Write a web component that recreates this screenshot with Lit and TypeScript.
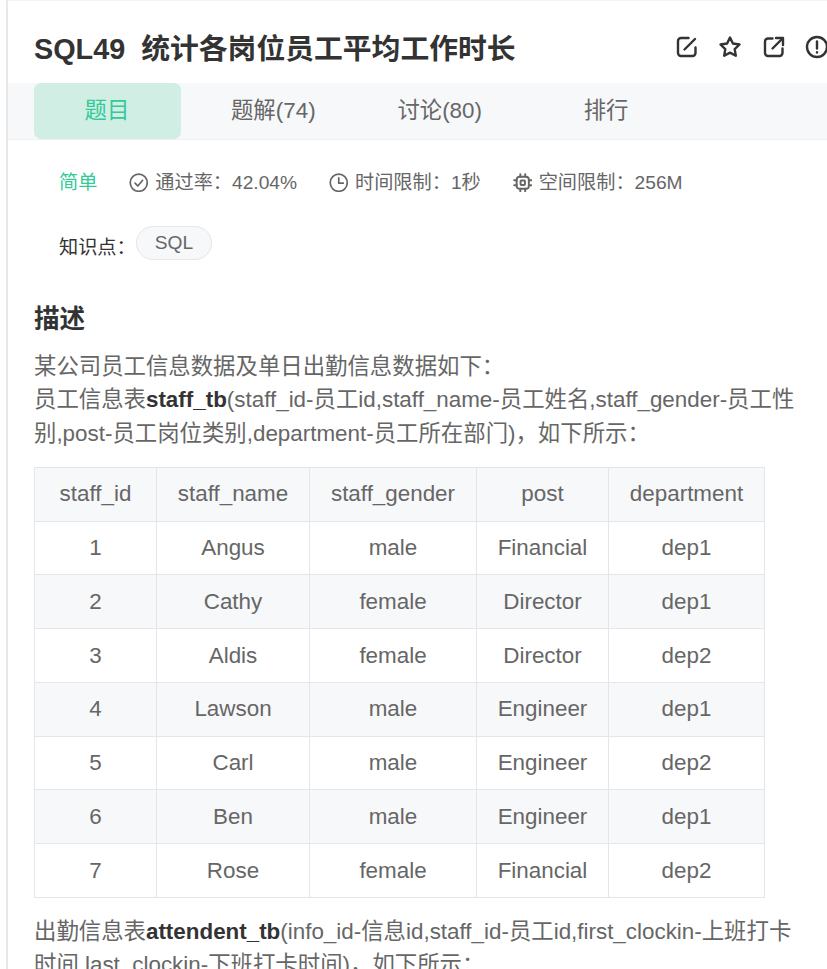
import { LitElement, html, css, svg } from "lit";
import { customElement } from "lit/decorators.js";

const rows = [
  ["1", "Angus", "male", "Financial", "dep1"],
  ["2", "Cathy", "female", "Director", "dep1"],
  ["3", "Aldis", "female", "Director", "dep2"],
  ["4", "Lawson", "male", "Engineer", "dep1"],
  ["5", "Carl", "male", "Engineer", "dep2"],
  ["6", "Ben", "male", "Engineer", "dep1"],
  ["7", "Rose", "female", "Financial", "dep2"],
];
const heads = ["staff_id", "staff_name", "staff_gender", "post", "department"];
const colWidths = [122, 153, 167, 132, 156];

const icon = (size: number, sw: number, body: unknown) => html`<svg
  width=${size} height=${size} viewBox="0 0 24 24" fill="none" stroke="currentColor"
  stroke-width=${sw} stroke-linecap="round" stroke-linejoin="round">${body}</svg>`;

@customElement("app-root")
export class AppRoot extends LitElement {
  static styles = css`
    :host {
      display: block;
      height: 969px;
      overflow: hidden;
      padding-left: 6px;
      box-sizing: border-box;
      font-family: "Liberation Sans", "Noto Sans CJK SC", sans-serif;
      color: #666;
      background: #fff;
    }
    .page {
      border-left: 2px solid #e8e8e8;
      border-top: 1px solid #f3f3f3;
      height: 100%;
      box-sizing: border-box;
      overflow: hidden;
    }
    .title-row {
      display: flex;
      align-items: center;
      justify-content: space-between;
      padding: 24.5px 0 14.5px 26px;
      width: 808px;
      box-sizing: border-box;
    }
    h1 {
      margin: 0;
      padding-top: 3px;
      font-size: 28.8px;
      line-height: 40px;
      font-weight: 700;
      color: #333;
      white-space: pre;
    }
    .actions {
      display: flex;
      gap: 19.5px;
      color: #333;
      margin-right: -13px;
    }
    .actions svg { display: block; }
    .tabs {
      display: flex;
      gap: 19.6px;
      padding-left: 26px;
      background: #f7f8fa;
      border-bottom: 1px solid #eef0f3;
    }
    .tab {
      width: 146.8px;
      height: 56px;
      line-height: 56px;
      box-sizing: border-box;
      padding-right: 1px;
      text-align: center;
      font-size: 22.4px;
      color: #666;
      border-radius: 7px;
    }
    .tab.active {
      background: #d1eee5;
      color: #32ca99;
    }
    .body { padding: 0 0 0 26px; width: 797px; box-sizing: border-box; }
    .meta {
      display: flex;
      align-items: center;
      gap: 32px;
      padding: 29px 0 0 25px;
      font-size: 19.2px;
      line-height: 28.8px;
      white-space: nowrap;
    }
    .level { color: #32ca99; }
    .stat { display: flex; align-items: center; gap: 6.4px; }
    .stat svg { display: block; margin-bottom: 2px; }
    .tags {
      display: flex;
      align-items: flex-start;
      padding: 28.4px 0 0 25px;
      font-size: 19.2px;
    }
    .tags .label { color: #333; line-height: 28.8px; margin-top: 8px; }
    .pill {
      height: 34px;
      line-height: 32px;
      box-sizing: border-box;
      padding: 0 18px;
      border: 1px solid #e4e6eb;
      border-radius: 17px;
      background: #f7f8fa;
      color: #666;
    }
    h2 {
      margin: 40.2px 0 13px;
      font-size: 25.6px;
      line-height: 33.6px;
      font-weight: 700;
      color: #333;
    }
    p {
      margin: 0;
      font-size: 22.4px;
      line-height: 33.6px;
      color: #666;
    }
    p b { color: #333; font-weight: 700; }
    table {
      margin: 16.2px 0 16.8px;
      border-collapse: collapse;
      table-layout: fixed;
      width: 730px;
      font-size: 22.4px;
      line-height: 33.6px;
      color: #666;
    }
    th, td {
      border: 1px solid #e4e6eb;
      padding: 9.6px 0;
      text-align: center;
      font-weight: 400;
    }
    thead tr, tbody tr:nth-child(even) { background: #f7f8fa; }
  `;

  render() {
    return html`<div class="page">
      <div class="title-row">
        <h1>SQL49  统计各岗位员工平均工作时长</h1>
        <div class="actions">
          ${icon(24, 2.4, svg`<path d="M20.5 12.5V18a3 3 0 0 1-3 3H6a3 3 0 0 1-3-3V6a3 3 0 0 1 3-3h7.5"/><path d="M9.5 14.5 20 4"/>`)}
          ${icon(24, 2.4, svg`<path d="M12 2.5l2.9 6 6.6 1-4.8 4.6 1.1 6.6L12 17.6l-5.8 3.1 1.1-6.6L2.5 9.5l6.6-1z"/>`)}
          ${icon(24, 2.4, svg`<path d="M10.5 3.5H6a3 3 0 0 0-3 3V18a3 3 0 0 0 3 3h11.5a3 3 0 0 0 3-3v-4.5"/><path d="M10.5 13.5 20 4"/><path d="M14 3h7v7"/>`)}
          ${icon(24, 2.4, svg`<circle cx="12" cy="12" r="10"/><path d="M12 6.5v7"/><path d="M12 17.2v.3"/>`)}
        </div>
      </div>
      <div class="tabs">
        <div class="tab active">题目</div>
        <div class="tab">题解(74)</div>
        <div class="tab">讨论(80)</div>
        <div class="tab">排行</div>
      </div>
      <div class="body">
        <div class="meta">
          <span class="level">简单</span>
          <span class="stat">
            ${icon(19.5, 2.1, svg`<circle cx="12" cy="12" r="10.5"/><path d="M7.5 12.5 10.8 16l6-7"/>`)}
            通过率：42.04%
          </span>
          <span class="stat">
            ${icon(19.5, 2.1, svg`<circle cx="12" cy="12" r="10.5"/><path d="M12 6V12.5h5.5"/>`)}
            时间限制：1秒
          </span>
          <span class="stat">
            ${icon(19.5, 2.4, svg`<rect x="4.5" y="4.5" width="15" height="15" rx="3.5"/><rect x="9.3" y="9.3" width="5.4" height="5.4" rx="1"/><path d="M9 1.5v3M15 1.5v3M9 19.5v3M15 19.5v3M1.5 9h3M1.5 15h3M19.5 9h3M19.5 15h3"/>`)}
            空间限制：256M
          </span>
        </div>
        <div class="tags">
          <span class="label">知识点：</span>
          <span class="pill">SQL</span>
        </div>
        <h2>描述</h2>
        <p>某公司员工信息数据及单日出勤信息数据如下：<br />员工信息表<b>staff_tb</b>(staff_id-员工id,staff_name-员工姓名,staff_gender-员工性别,post-员工岗位类别,department-员工所在部门)，如下所示：</p>
        <table>
          <colgroup>${colWidths.map((w) => html`<col style="width:${w}px" />`)}</colgroup>
          <thead><tr>${heads.map((h) => html`<th>${h}</th>`)}</tr></thead>
          <tbody>${rows.map((r) => html`<tr>${r.map((c) => html`<td>${c}</td>`)}</tr>`)}</tbody>
        </table>
        <p>出勤信息表<b>attendent_tb</b>(info_id-信息id,staff_id-员工id,first_clockin-上班打卡时间,last_clockin-下班打卡时间)，如下所示：</p>
      </div>
    </div>`;
  }
}
